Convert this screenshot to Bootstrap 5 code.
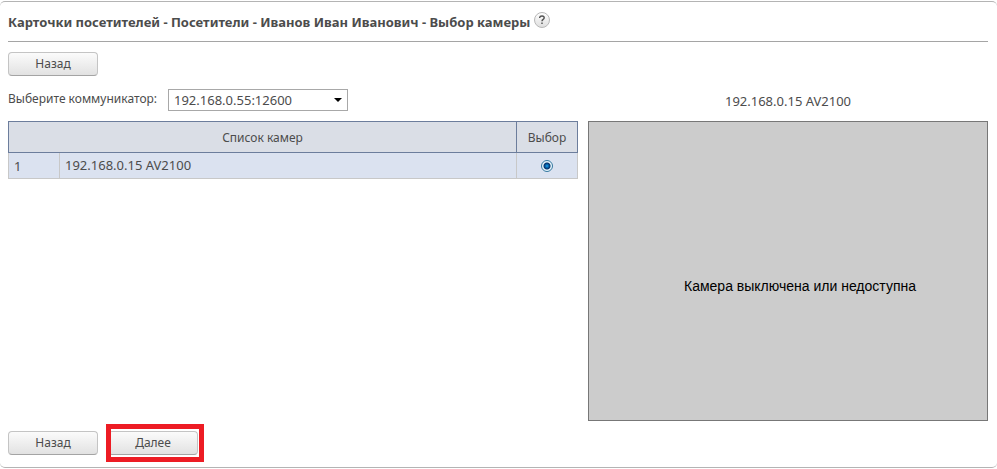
<!DOCTYPE html>
<html lang="ru">
<head>
<meta charset="utf-8">
<meta name="viewport" content="width=device-width, initial-scale=1">
<title>Выбор камеры</title>
<link href="https://cdn.jsdelivr.net/npm/bootstrap@5.3.0/dist/css/bootstrap.min.css" rel="stylesheet">
<style>
body { font: 12px/16px "Noto Sans", sans-serif; color: #4c4c4c; background: #fff; }
.panel { margin-top: 1px; padding: 0 9px 12px 8px; border: solid #b4b4b4; border-width: 1px 0; border-radius: 5px; }
.page-head { height: 40px; margin-bottom: 10px; border-bottom: 1px solid #a5a5a5; }
.page-title { font-size: 13px; line-height: 16px; font-weight: 700; }
.address { font-size: 13px; }
.help-btn { width: 16px; height: 16px; }
.action-btn { width: 90px; height: 24px; border: 1px solid #c4c4c4; border-bottom-color: #a4a4a4; border-radius: 4px; background: linear-gradient(#fbfbfb, #e2e2e2); color: #4c4c4c; font-size: 12px; line-height: 16px; }
.action-btn:hover { background: #e6e6e6; border-color: #a4a4a4; color: #333; }
.split, .actions { gap: 10px; }
.split { margin-top: 13px; }
.actions { margin-top: 10px; }
.toolbar-row { height: 22px; margin-bottom: 10px; }
.server-label { width: 160px; padding-top: 2px; }
.server-select { width: 180px; height: 22px; padding: 0 20px 0 5px; border: 1px solid #a8a8a8; border-radius: 0; background-color: #fff; color: #4c4c4c; appearance: none; }
.arrow { right: 6px; top: 9px; }
.cams-col { flex: 1 1 570px; }
.view-col { flex: 0 0 400px; }
.view-name { padding-top: 2px; }
.cams { border-collapse: collapse; table-layout: fixed; }
.cams th { height: 31px; padding-top: 2px; border: 1px solid #6c7d9c; background: #dadee6; font-weight: 400; text-align: center; }
.cams td { height: 26px; padding: 0 5px; border: 1px solid #c8c8c8; background: #dbe2f0; }
.num-cell { width: 51px; }
.pick-cell { width: 61px; }
.cam-radio { appearance: none; width: 12px; height: 12px; border: 1px solid #34779f; border-radius: 50%; background: #fff; }
.cam-radio:checked { background: radial-gradient(circle at 5px 5px, #2bb4f4 0, #0878c4 1px, #07336b 3px, #e8f6fc 4px); }
.video-box { height: 300px; padding: 29px 0 0 24px; border: 1px solid #777; background: #ccc; color: #000; font: 14px/16px "Liberation Sans", Arial, sans-serif; }
.callout-frame { inset: -7px -6px -7px -2px; border: 5px solid #ed1c24; pointer-events: none; }
</style>
<script src="https://cdn.jsdelivr.net/npm/bootstrap@5.3.0/dist/js/bootstrap.bundle.min.js" defer></script>
</head>
<body>
<main class="panel">
  <header class="page-head d-flex align-items-center">
    <h1 class="page-title m-0">Карточки посетителей - Посетители - Иванов Иван Иванович - Выбор камеры</h1>
    <button type="button" class="help-btn btn p-0 border-0 d-flex ms-1 mb-1" aria-label="Справка">
      <svg width="16" height="16" viewBox="0 0 16 16" aria-hidden="true">
        <defs><linearGradient id="hg" x2="0" y2="1"><stop stop-color="#fff"/><stop offset="1" stop-color="#dedede"/></linearGradient></defs>
        <circle cx="8" cy="8" r="7.5" fill="url(#hg)" stroke="#b8b8b8"/>
        <path d="M5.7 6V5.4Q5.9 4 8 4q2.2 0 2.2 1.8 0 1-1.1 1.7Q8 8 8 9.2M8 10.5v1.6" fill="none" stroke="#505050" stroke-width="1.4"/>
      </svg>
    </button>
  </header>
  <div class="d-flex">
    <button type="button" class="action-btn btn p-0">Назад</button>
  </div>
  <div class="split d-flex">
    <div class="cams-col">
      <div class="toolbar-row d-flex">
        <label for="server" class="server-label">Выберите коммуникатор:</label>
        <div class="position-relative">
          <select id="server" class="server-select address"><option>192.168.0.55:12600</option></select>
          <svg class="arrow position-absolute pe-none" width="8" height="4" viewBox="0 0 8 4" aria-hidden="true"><path d="M0 0h8L4 4z"/></svg>
        </div>
      </div>
      <table class="cams w-100">
        <colgroup><col class="num-cell"><col><col class="pick-cell"></colgroup>
        <thead><tr><th colspan="2">Список камер</th><th>Выбор</th></tr></thead>
        <tbody><tr>
          <td class="address">1</td>
          <td><label for="cam1" class="address">192.168.0.15 AV2100</label></td>
          <td class="text-center"><input type="radio" id="cam1" name="cam" class="cam-radio align-middle m-0" aria-label="Выбор" checked></td>
        </tr></tbody>
      </table>
    </div>
    <section class="view-col">
      <div class="toolbar-row view-name address d-flex align-items-center justify-content-center">192.168.0.15 AV2100</div>
      <div class="video-box d-flex align-items-center justify-content-center">Камера выключена или недоступна</div>
    </section>
  </div>
  <footer class="actions d-flex">
    <button type="button" class="action-btn btn p-0">Назад</button>
    <div class="position-relative d-flex">
      <button type="button" class="action-btn btn p-0">Далее</button>
      <span class="callout-frame position-absolute"></span>
    </div>
  </footer>
</main>
</body>
</html>
